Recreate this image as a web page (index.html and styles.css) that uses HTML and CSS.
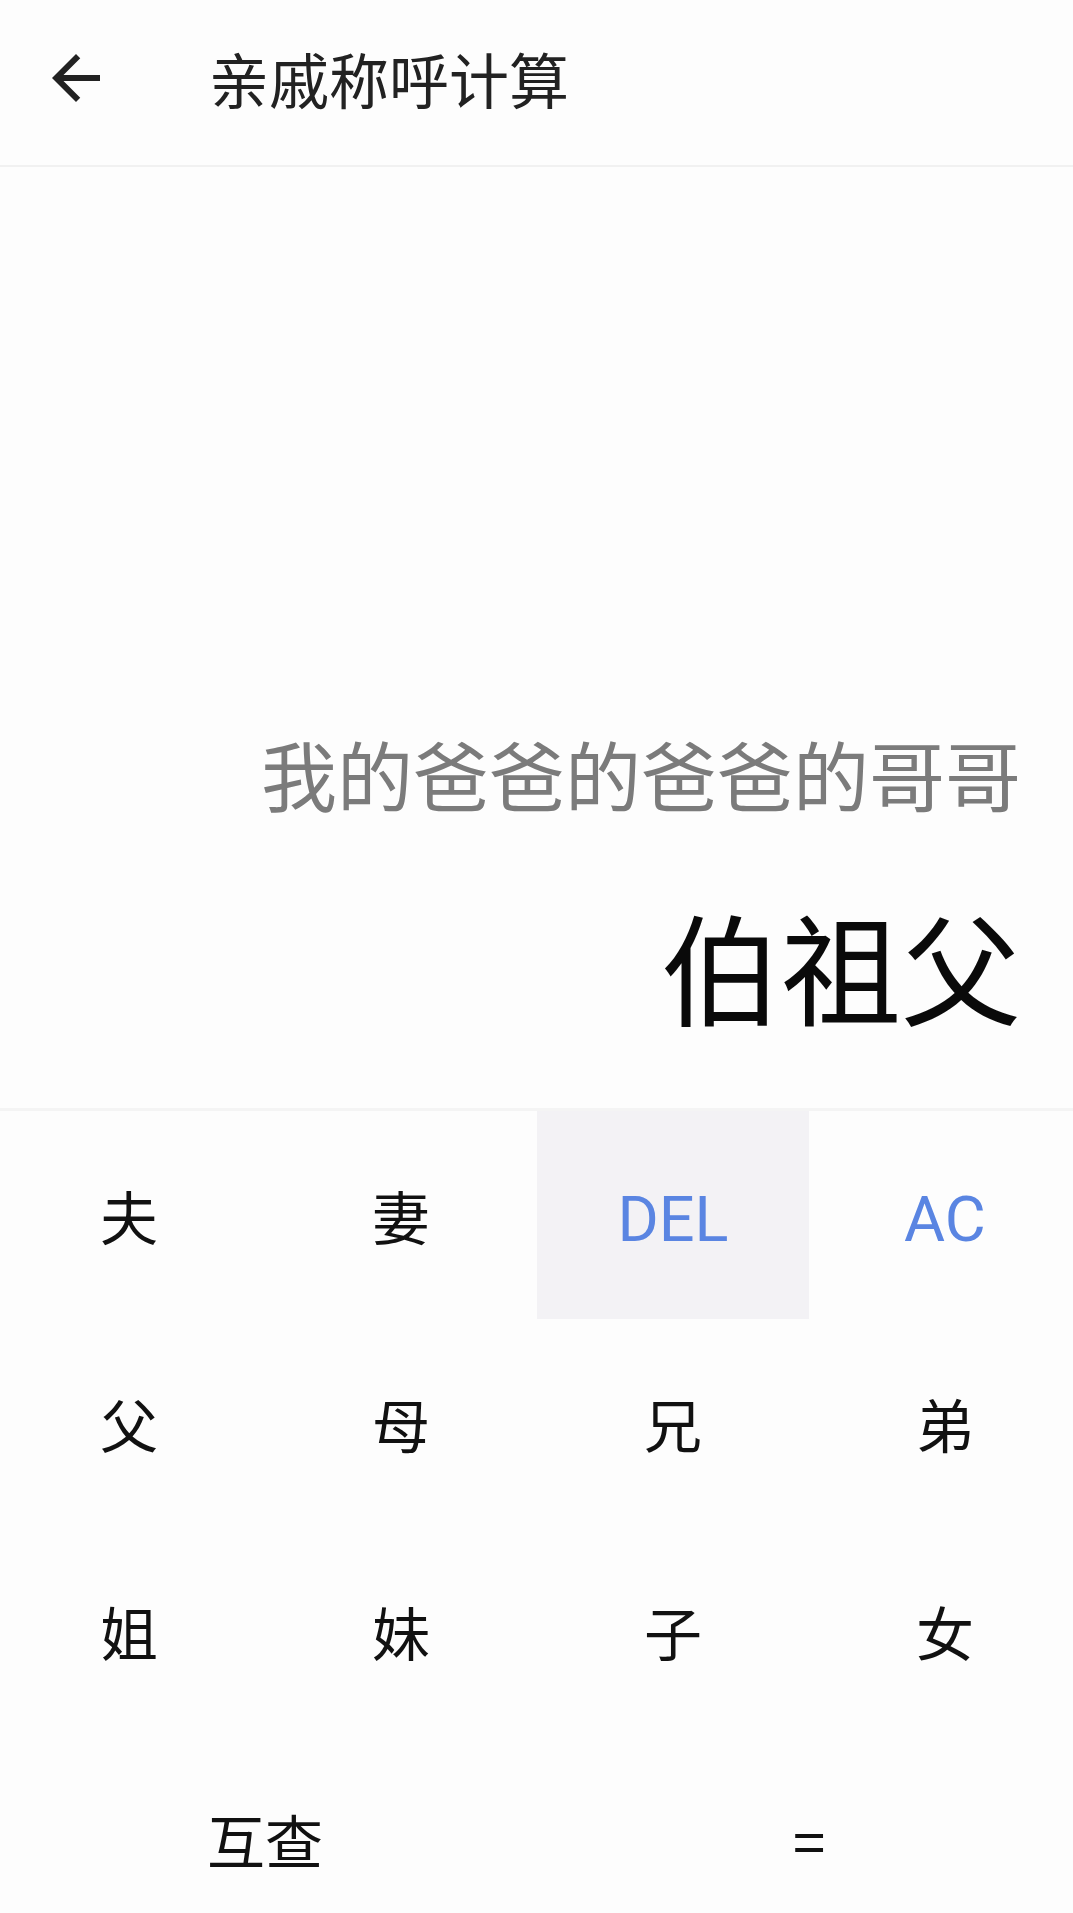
FILE: index.html
```html
<!DOCTYPE html>
<html lang="zh-CN">
<head>
<meta charset="utf-8">
<title>亲戚称呼计算</title>
<link rel="stylesheet" href="styles.css">
</head>
<body>
<div class="app">
  <header class="topbar">
    <button class="back" aria-label="返回">
      <svg viewBox="0 0 24 24" width="72" height="72"><path d="M20 11H7.83l5.59-5.59L12 4l-8 8 8 8 1.41-1.41L7.83 13H20v-2z" fill="currentColor"/></svg>
    </button>
    <h1 class="title">亲戚称呼计算</h1>
  </header>
  <main class="display">
    <div class="expr">我的爸爸的爸爸的哥哥</div>
    <div class="result">伯祖父</div>
  </main>
  <section class="keypad">
    <button class="key">夫</button>
    <button class="key">妻</button>
    <button class="key fn active">DEL</button>
    <button class="key fn">AC</button>
    <button class="key">父</button>
    <button class="key">母</button>
    <button class="key">兄</button>
    <button class="key">弟</button>
    <button class="key">姐</button>
    <button class="key">妹</button>
    <button class="key">子</button>
    <button class="key">女</button>
    <button class="key wide">互查</button>
    <button class="key wide">=</button>
  </section>
</div>
</body>
</html>
```
FILE: styles.css
```css
* { box-sizing: border-box; }
html, body { margin: 0; padding: 0; background: #fdfdfd; }
body { font-family: "Noto Sans CJK SC", "Noto Sans", sans-serif; }

.app {
  width: 1073px;
  height: 1913px;
  overflow: hidden;
  display: flex;
  flex-direction: column;
  background: #fdfdfd;
}

.topbar {
  height: 167px;
  flex: none;
  display: flex;
  align-items: center;
  padding: 0 0 9px 40px;
  border-bottom: 2px solid #f1f1f1;
}
.back {
  width: 72px;
  height: 72px;
  padding: 0;
  border: 0;
  background: none;
  color: #222;
  display: flex;
}
.title {
  margin: 0 0 0 97px;
  font-size: 60px;
  line-height: 72px;
  font-weight: 400;
  color: #222;
}

.display {
  height: 944px;
  flex: none;
  display: flex;
  flex-direction: column;
  justify-content: flex-end;
  align-items: flex-end;
  padding: 0 52px 71px 0;
  border-bottom: 3px solid #f4f4f4;
}
.expr {
  font-size: 76px;
  line-height: 91px;
  color: #7b7b7b;
  margin-bottom: 74px;
}
.result {
  font-size: 120px;
  line-height: 144px;
  color: #0a0a0a;
}

.keypad {
  flex: none;
  width: 1088px;
  margin-left: -7px;
  display: grid;
  grid-template-columns: repeat(4, 272px);
  grid-auto-rows: 208px;
}
.key {
  border: 0;
  background: transparent;
  padding: 0;
  font-family: "Noto Sans CJK SC", sans-serif;
  font-size: 58px;
  line-height: 70px;
  color: #111;
  display: flex;
  align-items: center;
  justify-content: center;
}
.key.fn {
  font-family: Roboto, "Noto Sans", sans-serif;
  font-size: 63px;
  color: #5a85e2;
  padding-top: 9px;
}
.key.active { background: #f3f2f5; }
.key.wide { grid-column: span 2; }
```
